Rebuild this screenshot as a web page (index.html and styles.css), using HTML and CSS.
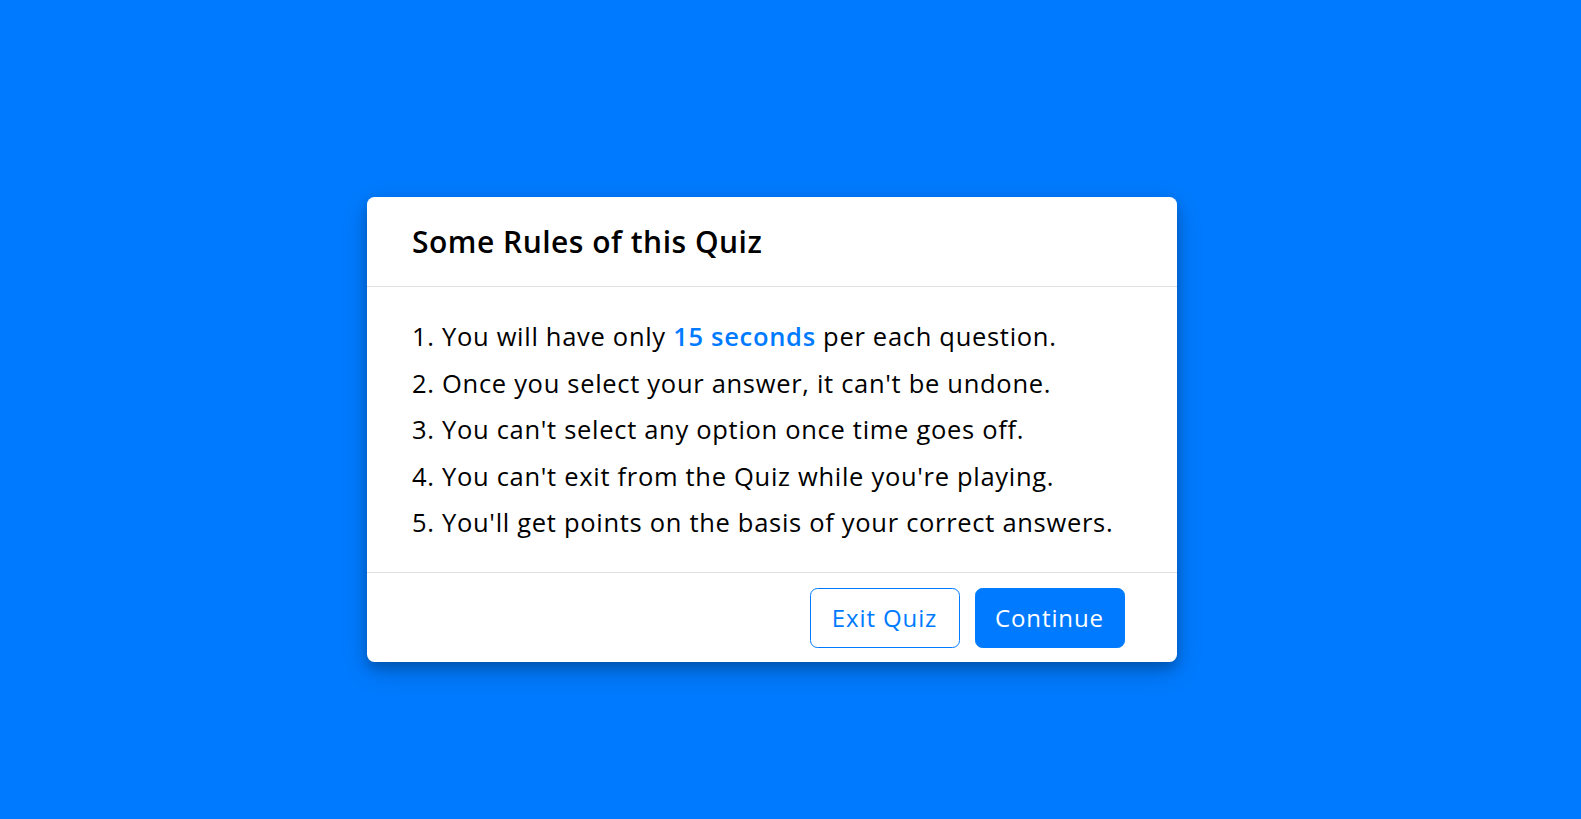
FILE: index.html
```html
<!DOCTYPE html>
<html lang="en">
<head>
<meta charset="utf-8">
<title>Quiz Rules</title>
<link rel="stylesheet" href="styles.css">
</head>
<body>
<div class="stage">
  <div class="info-box">
    <div class="info-title"><span>Some Rules of this Quiz</span></div>
    <div class="info-list">
      <div class="info">1. You will have only <span class="accent">15 seconds</span> per each question.</div>
      <div class="info">2. Once you select your answer, it can't be undone.</div>
      <div class="info">3. You can't select any option once time goes off.</div>
      <div class="info">4. You can't exit from the Quiz while you're playing.</div>
      <div class="info">5. You'll get points on the basis of your correct answers.</div>
    </div>
    <div class="buttons">
      <button class="btn quit">Exit Quiz</button>
      <button class="btn restart">Continue</button>
    </div>
  </div>
</div>
</body>
</html>
```
FILE: styles.css
```css
* { box-sizing: border-box; }
html, body { margin: 0; padding: 0; }
body {
  background: #007bff;
  font-family: "Open Sans", "Liberation Sans", sans-serif;
  height: 819px;
  overflow: hidden;
}
.stage {
  padding: 197px 0 0 367px;
}
.info-box {
  width: 810px;
  background: #fff;
  border-radius: 7.5px;
  box-shadow: 0 6px 12px 0 rgba(0,0,0,0.2), 0 9px 30px 0 rgba(0,0,0,0.19);
}
.info-title {
  height: 90px;
  padding: 0 45px;
  display: flex;
  align-items: center;
  border-bottom: 1.5px solid #e0e0e0;
  font-size: 30px;
  font-weight: 600;
  letter-spacing: 0.5px;
  color: #000;
}
.info-list {
  padding: 22.5px 45px;
}
.info {
  margin: 7.5px 0;
  font-size: 25.5px;
  line-height: 39px;
  letter-spacing: 0.7px;
  color: #000;
}
.accent {
  color: #007bff;
  font-weight: 600;
}
.buttons {
  height: 90px;
  padding: 0 52.5px 0 45px;
  border-top: 1.5px solid #e0e0e0;
  display: flex;
  align-items: center;
  justify-content: flex-end;
  gap: 15px;
}
.btn {
  height: 60px;
  width: 150px;
  font-family: inherit;
  font-size: 24px;
  font-weight: 500;
  letter-spacing: 0.9px;
  border-radius: 7.5px;
  border: 1.5px solid #007bff;
  cursor: pointer;
}
.quit {
  background: #fff;
  color: #007bff;
}
.restart {
  background: #007bff;
  color: #fff;
}
```
